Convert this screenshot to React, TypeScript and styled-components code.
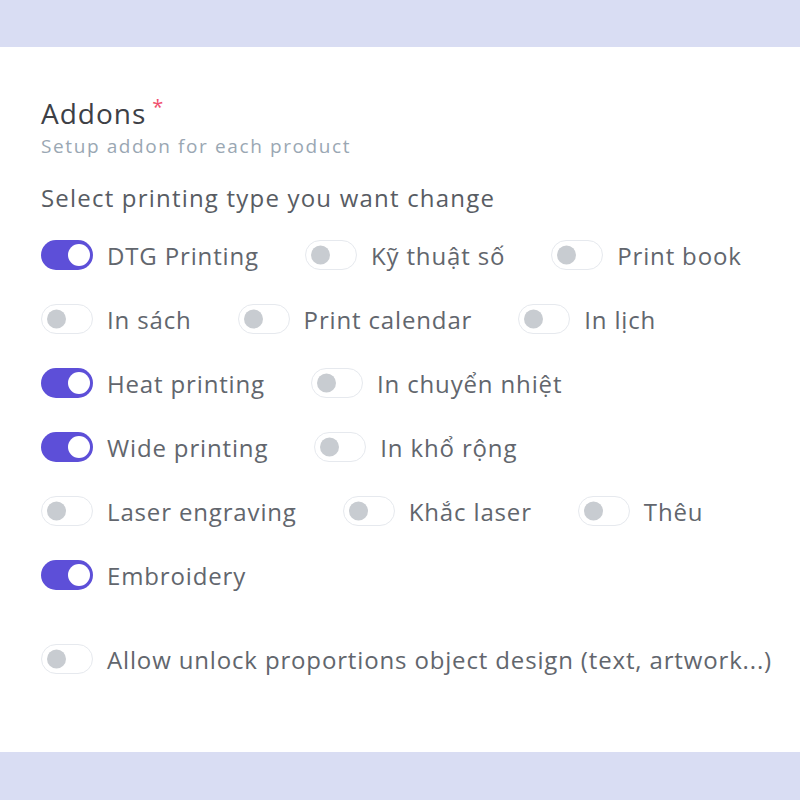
import React from "react";
import styled, { createGlobalStyle } from "styled-components";

const Global = createGlobalStyle`
  html, body { margin: 0; padding: 0; background: #ffffff; }
  body { font-family: "Open Sans", "Noto Sans", sans-serif; }
`;

const Page = styled.div`
  width: 800px;
  height: 800px;
  display: flex;
  flex-direction: column;
  background: #d9ddf3;
`;

const Band = styled.div<{ $h: number }>`
  height: ${(p) => p.$h}px;
  flex: none;
`;

const Card = styled.div`
  flex: 1;
  background: #ffffff;
  padding: 50px 0 0 41px;
  display: flex;
  flex-direction: column;
`;

const Title = styled.div`
  font-size: 28px;
  color: #3d4046;
  line-height: 32px;
  display: flex;
  align-items: flex-start;
  letter-spacing: 1px;
`;

const Star = styled.span`
  color: #f0506e;
  font-size: 20px;
  margin-left: 6px;
  line-height: 20px;
`;

const Sub = styled.div`
  font-size: 19px;
  color: #9aa7b3;
  margin-top: 5px;
  line-height: 24px;
  letter-spacing: 1.6px;
`;

const Lead = styled.div`
  font-size: 24px;
  color: #585c63;
  margin-top: 26px;
  line-height: 28px;
  letter-spacing: 1.2px;
`;

const List = styled.div`
  display: flex;
  flex-direction: column;
  gap: 34px;
  margin-top: 28px;
`;

const Row = styled.div<{ $extra?: number }>`
  display: flex;
  align-items: center;
  gap: 46px;
  height: 30px;
  margin-top: ${(p) => p.$extra || 0}px;
`;

const Item = styled.div`
  display: flex;
  align-items: center;
  gap: 14px;
`;

const Track = styled.div<{ $on: boolean }>`
  width: 52px;
  height: 30px;
  box-sizing: border-box;
  border-radius: 15px;
  background: ${(p) => (p.$on ? "#5d4fd8" : "#ffffff")};
  border: ${(p) => (p.$on ? "none" : "1.5px solid #e6e9ee")};
  position: relative;
  flex: none;
`;

const Knob = styled.div<{ $on: boolean }>`
  position: absolute;
  top: 50%;
  transform: translateY(-50%);
  border-radius: 50%;
  ${(p) =>
    p.$on
      ? "width: 22px; height: 22px; right: 3px; background: #ffffff;"
      : "width: 19px; height: 19px; left: 5px; background: #c8ccd1;"}
`;

const Label = styled.span`
  font-size: 24px;
  color: #62666d;
  letter-spacing: 0.85px;
  white-space: nowrap;
`;

type Opt = [string, boolean];

const rows: Opt[][] = [
  [["DTG Printing", true], ["Kỹ thuật số", false], ["Print book", false]],
  [["In sách", false], ["Print calendar", false], ["In lịch", false]],
  [["Heat printing", true], ["In chuyển nhiệt", false]],
  [["Wide printing", true], ["In khổ rộng", false]],
  [["Laser engraving", false], ["Khắc laser", false], ["Thêu", false]],
  [["Embroidery", true]],
];

const Toggle = ({ on }: { on: boolean }) => (
  <Track $on={on}>
    <Knob $on={on} />
  </Track>
);

export default function App() {
  return (
    <Page>
      <Global />
      <Band $h={47} />
      <Card>
        <Title>
          Addons<Star>*</Star>
        </Title>
        <Sub>Setup addon for each product</Sub>
        <Lead>Select printing type you want change</Lead>
        <List>
          {rows.map((r, i) => (
            <Row key={i}>
              {r.map(([t, on]) => (
                <Item key={t}>
                  <Toggle on={on} />
                  <Label>{t}</Label>
                </Item>
              ))}
            </Row>
          ))}
          <Row $extra={20}>
            <Item>
              <Toggle on={false} />
              <Label>Allow unlock proportions object design (text, artwork...)</Label>
            </Item>
          </Row>
        </List>
      </Card>
      <Band $h={48} />
    </Page>
  );
}
